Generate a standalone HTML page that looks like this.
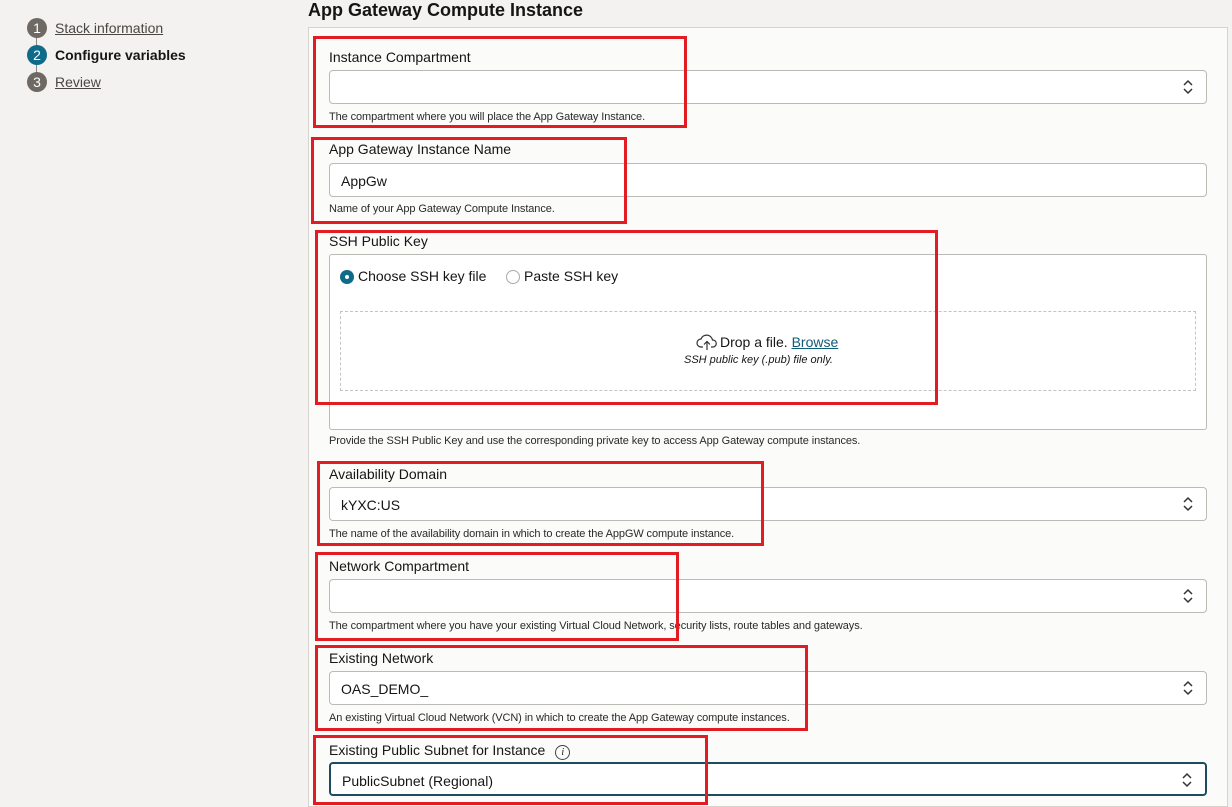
<!DOCTYPE html>
<html><head><meta charset="utf-8"><style>
*{margin:0;padding:0;box-sizing:border-box}
body{width:1232px;height:792px;overflow:hidden;background:#f3f2f0;font-family:"Liberation Sans",sans-serif;color:#161513;position:relative}
.a{position:absolute}
.step{position:absolute;left:27px;width:20px;height:20px;border-radius:50%;background:#6f6964;color:#fff;font-size:14px;text-align:center;line-height:20px}
.sl{position:absolute;left:55px;font-size:14px;text-decoration:underline;color:#4a4641}
.panel{position:absolute;left:308px;top:27px;width:920px;height:780px;background:#fbfbfa;border:1px solid #d6d3cf}
.lbl{position:absolute;left:329px;font-size:14px;color:#161513}
.inp{position:absolute;left:329px;width:878px;height:34px;border:1px solid #bdbab5;border-radius:4px;background:#fff;font-size:14px;padding:9px 11px}
.help{position:absolute;left:329px;font-size:11px;letter-spacing:-0.1px;color:#2c2a27}
.red{position:absolute;border:3px solid #e31b23}
.chev{position:absolute;right:12px;top:8px}
</style></head><body>
<div class="a" style="left:36px;top:30px;width:1px;height:50px;background:#8a8580"></div>
<div class="step" style="top:18px">1</div><div class="sl" style="top:20px">Stack information</div>
<div class="step" style="top:45px;background:#0f6b8a">2</div><div class="sl" style="top:47px;text-decoration:none;font-weight:bold;color:#161513">Configure variables</div>
<div class="step" style="top:72px">3</div><div class="sl" style="top:74px">Review</div>
<div class="a" style="left:308px;top:0;font-size:18px;font-weight:bold">App Gateway Compute Instance</div>
<div class="panel"></div>

<div class="lbl" style="top:49px">Instance Compartment</div>
<div class="inp" style="top:70px"><svg class="chev" width="12" height="16" viewBox="0 0 12 16"><path d="M2 6l4-4 4 4M2 10l4 4 4-4" fill="none" stroke="#333" stroke-width="1.5"/></svg></div>
<div class="help" style="top:111px">The compartment where you will place the App Gateway Instance.</div>

<div class="lbl" style="top:141px">App Gateway Instance Name</div>
<div class="inp" style="top:163px">AppGw</div>
<div class="help" style="top:203px">Name of your App Gateway Compute Instance.</div>

<div class="lbl" style="top:233px">SSH Public Key</div>
<div class="a" style="left:329px;top:254px;width:878px;height:176px;border:1px solid #bdbab5;border-radius:3px;background:#fff"></div>
<div class="a" style="left:340px;top:270px;width:14px;height:14px;border-radius:50%;background:#0f6b8a"><div class="a" style="left:5px;top:5px;width:4px;height:4px;background:#fff;border-radius:50%"></div></div>
<div class="a" style="left:358px;top:268px;font-size:14px">Choose SSH key file</div>
<div class="a" style="left:506px;top:270px;width:14px;height:14px;border-radius:50%;border:1px solid #aaa"></div>
<div class="a" style="left:524px;top:268px;font-size:14px">Paste SSH key</div>
<div class="a" style="left:340px;top:311px;width:856px;height:80px;border:1px dashed #c6c3bf"></div>
<svg class="a" style="left:696px;top:333px" width="22" height="18" viewBox="0 0 22 18"><path d="M7 14H5a4 4 0 0 1 0-8 6 6 0 0 1 11.5 1A3.5 3.5 0 0 1 17 14h-2M11 17V9M8 11.5l3-3 3 3" fill="none" stroke="#333" stroke-width="1.2"/></svg>
<div class="a" style="left:720px;top:334px;font-size:14px">Drop a file. <span style="color:#0f5b78;text-decoration:underline">Browse</span></div>
<div class="a" style="left:684px;top:354px;font-size:11px;font-style:italic">SSH public key (.pub) file only.</div>
<div class="help" style="top:435px">Provide the SSH Public Key and use the corresponding private key to access App Gateway compute instances.</div>

<div class="lbl" style="top:466px">Availability Domain</div>
<div class="inp" style="top:487px">kYXC:US<svg class="chev" width="12" height="16" viewBox="0 0 12 16"><path d="M2 6l4-4 4 4M2 10l4 4 4-4" fill="none" stroke="#333" stroke-width="1.5"/></svg></div>
<div class="help" style="top:528px">The name of the availability domain in which to create the AppGW compute instance.</div>

<div class="lbl" style="top:558px">Network Compartment</div>
<div class="inp" style="top:579px"><svg class="chev" width="12" height="16" viewBox="0 0 12 16"><path d="M2 6l4-4 4 4M2 10l4 4 4-4" fill="none" stroke="#333" stroke-width="1.5"/></svg></div>
<div class="help" style="top:620px">The compartment where you have your existing Virtual Cloud Network, security lists, route tables and gateways.</div>

<div class="lbl" style="top:650px">Existing Network</div>
<div class="inp" style="top:671px">OAS_DEMO_<svg class="chev" width="12" height="16" viewBox="0 0 12 16"><path d="M2 6l4-4 4 4M2 10l4 4 4-4" fill="none" stroke="#333" stroke-width="1.5"/></svg></div>
<div class="help" style="top:712px">An existing Virtual Cloud Network (VCN) in which to create the App Gateway compute instances.</div>

<div class="lbl" style="top:742px">Existing Public Subnet for Instance <span style="display:inline-block;width:15px;height:15px;border:1px solid #444;border-radius:50%;font-size:10px;font-style:italic;text-align:center;line-height:13px;margin-left:6px;font-family:'Liberation Serif',serif">i</span></div>
<div class="inp" style="top:762px;border:2px solid #1c4d5e">PublicSubnet (Regional)<svg class="chev" width="12" height="16" viewBox="0 0 12 16"><path d="M2 6l4-4 4 4M2 10l4 4 4-4" fill="none" stroke="#333" stroke-width="1.5"/></svg></div>

<div class="red" style="left:313px;top:36px;width:374px;height:92px"></div>
<div class="red" style="left:311px;top:137px;width:316px;height:87px"></div>
<div class="red" style="left:315px;top:230px;width:623px;height:175px"></div>
<div class="red" style="left:317px;top:461px;width:447px;height:85px"></div>
<div class="red" style="left:315px;top:552px;width:364px;height:89px"></div>
<div class="red" style="left:315px;top:645px;width:493px;height:86px"></div>
<div class="red" style="left:313px;top:735px;width:395px;height:70px"></div>
</body></html>
